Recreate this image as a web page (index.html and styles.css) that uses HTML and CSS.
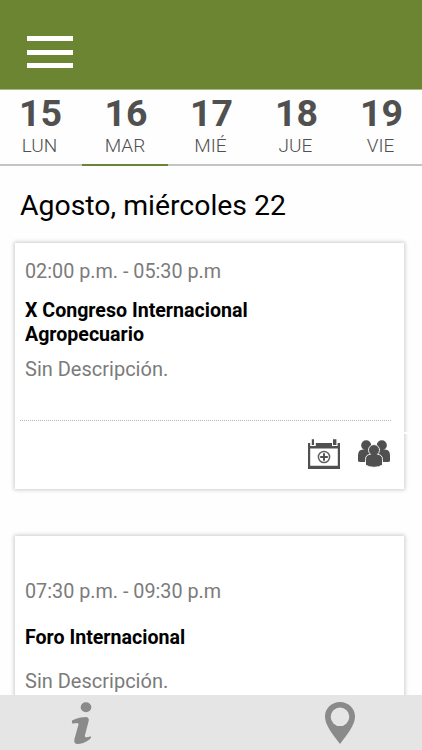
FILE: index.html
```html
<!DOCTYPE html>
<html lang="es">
<head>
    <meta charset="UTF-8">
    <meta name="viewport" content="width=device-width, initial-scale=1.0">
    <title>Agenda</title>
    <link rel="stylesheet" href="styles.css">
</head>
<body>

<div class="app">
    <header class="header">
        <button type="button" class="menu" aria-label="Menú">
            <span></span>
            <span></span>
            <span></span>
        </button>
    </header>

    <nav class="days">
        <a class="day"><b>15</b><span>LUN</span></a>
        <a class="day active"><b>16</b><span>MAR</span></a>
        <a class="day"><b>17</b><span>MIÉ</span></a>
        <a class="day"><b>18</b><span>JUE</span></a>
        <a class="day"><b>19</b><span>VIE</span></a>
    </nav>

    <main class="content">
        <h1>Agosto, miércoles 22</h1>

        <article class="card first">
            <p class="time">02:00 p.m. - 05:30 p.m</p>
            <h2>X Congreso Internacional Agropecuario</h2>
            <p class="description">Sin Descripción.</p>
            <div class="actions">
                <svg class="calendar" width="34" height="32" viewBox="0 0 34 32">
                    <path fill="#505050" fill-rule="evenodd" d="M1 5H33V31H1ZM3.2 10.5V27.8H30.8V10.5Z"/>
                    <path fill="#fff" d="M3.2 1H8.8V8H3.2ZM25 1H30.6V8H25Z"/>
                    <path fill="#505050" d="M4.8 1.3H7V7H4.8ZM26 1.3H29.4V7H26Z"/>
                    <circle cx="17" cy="19" r="5.6" fill="none" stroke="#606060" stroke-width="1.5"/>
                    <path stroke="#505050" stroke-width="1.9" d="M13.2 19H20.8M17 15.2V22.8"/>
                </svg>
                <svg class="people" width="34" height="30" viewBox="0 0 34 30">
                    <g fill="#505050">
                        <circle cx="9.2" cy="6.3" r="5"/>
                        <path d="M1 22V16.5Q1 10.5 6 10.5H12Q16 10.5 16 16V23H5Q1 23 1 22Z"/>
                        <circle cx="24.8" cy="6.3" r="5"/>
                        <path d="M33 22V16.5Q33 10.5 28 10.5H22Q18 10.5 18 16V23H29Q33 23 33 22Z"/>
                    </g>
                    <path fill="#505050" stroke="#fff" stroke-width=".9" d="M8.5 26V20.5Q8.5 15.7 13.5 15.3A5.5 5.5 0 1 1 20.5 15.3Q25.5 15.7 25.5 20.5V26Q22 28.3 17 28.3T8.5 26Z"/>
                </svg>
            </div>
        </article>

        <article class="card second">
            <p class="time">07:30 p.m. - 09:30 p.m</p>
            <h2>Foro Internacional</h2>
            <p class="description">Sin Descripción.</p>
        </article>
    </main>

    <footer class="footer">
        <svg class="info" width="22" height="44" viewBox="0 0 22 44">
            <ellipse cx="15" cy="6.2" rx="5.3" ry="5" fill="#8a8a8a"/>
            <path fill="#8a8a8a" d="M1 19.5C5 17.5 8 16.2 13 16.2Q18.5 15.5 17.7 20L14 34Q13 38 19.8 35.2Q20.8 36.5 18.5 38.5C14 42 9 43.2 6 43Q2.3 42.7 3.6 37.500L7.5 23.5Q8 20.8 2.5 22.6Q.5 23 1 19.5Z"/>
        </svg>
        <svg class="pin" width="30" height="44" viewBox="0 0 30 44">
            <path fill="#8a8a8a" fill-rule="evenodd" d="M15 1C23.5 1 30 7.5 30 15.5C30 24 22.5 33 15 43C7.5 33 0 24 0 15.5C0 7.5 6.5 1 15 1ZM15 6.5A9.3 9.3 0 1 0 15 25.1A9.3 9.3 0 1 0 15 6.5Z"/>
        </svg>
    </footer>
</div>

</body>
</html>
```
FILE: styles.css
```css
* {
    box-sizing: border-box;
}
body {
    margin: 0;
    font-family: Roboto, sans-serif;
    background-color: #fefefe;
}
h1, h2, p {
    margin: 0;
}
.app {
    display: flex;
    flex-direction: column;
    height: 750px;
    overflow: hidden;
}
.header {
    flex: 0 0 90px;
    padding: 36px 27px 0;
    background-color: #6b8533;
    border-bottom: 1px solid #a9b886;
}
.menu {
    display: flex;
    flex-direction: column;
    justify-content: space-between;
    width: 46px;
    height: 32px;
    padding: 0;
    border: 0;
    background: none;
}
.menu span {
    height: 5px;
    background-color: #fff;
}
.days {
    display: flex;
    flex: 0 0 76px;
    margin-left: -3px;
}
.day {
    flex: 0 0 85px;
    padding-top: 3px;
    border-bottom: 2px solid #c4c4c4;
    text-align: center;
    color: #505050;
}
.day.active {
    flex-basis: 86px;
    border-color: #6b8533;
}
.day b {
    display: block;
    padding-left: 2px;
    font-size: 37.5px;
    line-height: 40px;
}
.day span {
    display: block;
    padding-top: 1px;
    font-size: 19px;
    font-weight: 300;
    line-height: 24px;
}
.content {
    flex: 1;
    min-height: 0;
    padding: 20px 18px 0 15px;
    overflow: hidden;
}
h1 {
    padding-left: 5px;
    font-size: 28.4px;
    font-weight: 400;
    line-height: 40px;
}
.card {
    height: 246px;
    margin-top: 17px;
    padding: 17px 13px 0 10px;
    background-color: #fff;
    box-shadow: 0 0 4px 1px #ccc;
}
.card.first {
    position: relative;
}
/* gap in the right edge of the card */
.card.first::after {
    content: "";
    position: absolute;
    top: 189px;
    right: -6px;
    width: 8px;
    height: 2px;
    background-color: #fff;
}
.time, .description {
    font-size: 19.8px;
    line-height: 24px;
    color: #7b7b7b;
}
.card h2 {
    width: 250px;
    margin: 15px 0 10px;
    font-size: 19.6px;
    line-height: 24px;
}
.description {
    font-size: 20px;
}
.actions {
    display: flex;
    justify-content: flex-end;
    gap: 16px;
    margin: 39px 0 0 -5px;
    padding-top: 17px;
    border-top: 1px dotted #b5b5b5;
}
.people {
    margin-top: 1px;
}
.card.second {
    height: 300px;
    margin-top: 47px;
    padding-top: 44px;
}
.second h2 {
    margin: 22px 0 19px;
}
.footer {
    display: flex;
    justify-content: space-between;
    flex: 0 0 55px;
    padding: 6px 67px 0 71px;
    background-color: #e5e5e5;
}
```
